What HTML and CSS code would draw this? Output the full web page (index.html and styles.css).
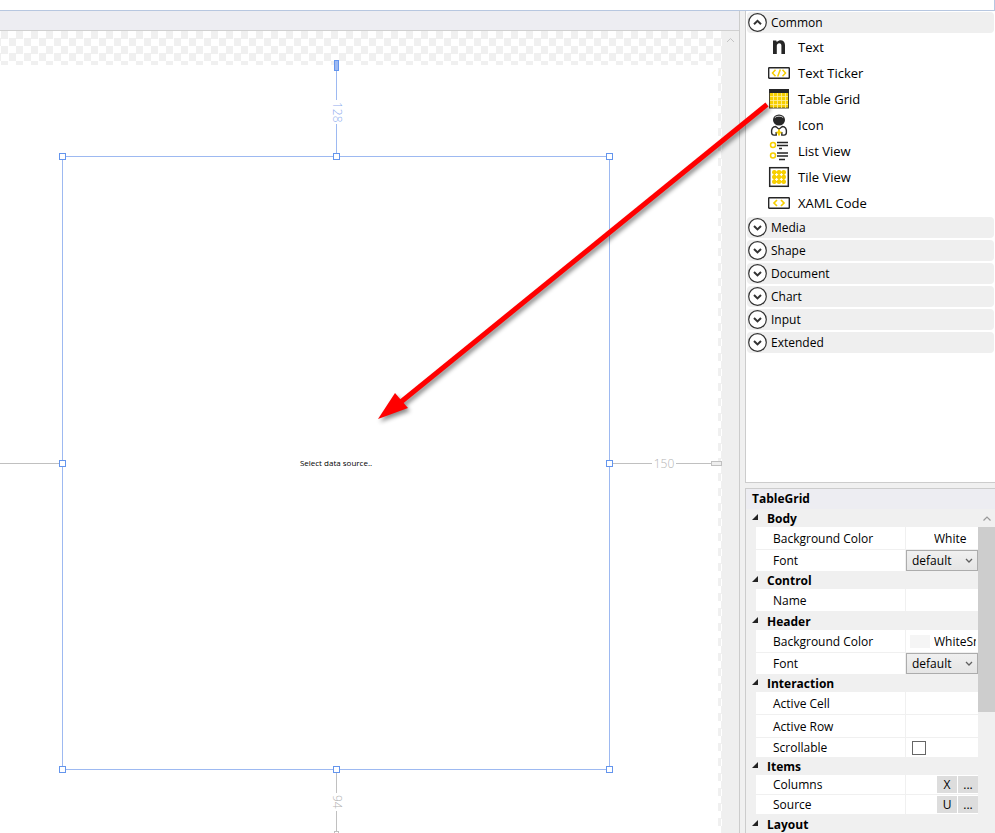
FILE: index.html
```html
<!DOCTYPE html>
<html lang="en">
<head>
<meta charset="utf-8">
<title>Designer</title>
<link rel="stylesheet" href="styles.css">
</head>
<body>
<div class="app">
  <div class="ribbon"></div>
  <div class="workspace">
    <main class="editor">
      <div class="tabbar"></div>
      <div class="canvas-row">
        <div class="canvas">
          <div class="artboard"></div>
          <div class="selection">
            <p class="placeholder">Select data source..</p>
            <i class="handle nw"></i><i class="handle n"></i><i class="handle ne"></i>
            <i class="handle w"></i><i class="handle e"></i>
            <i class="handle sw"></i><i class="handle s"></i><i class="handle se"></i>
          </div>
          <div class="measure measure-top"><i class="pin"></i><i class="line"></i><span class="distance">128</span><i class="line"></i></div>
          <div class="measure measure-bottom"><i class="line"></i><span class="distance">94</span><i class="line"></i><i class="pin"></i></div>
          <div class="measure measure-left"><i class="line"></i></div>
          <div class="measure measure-right"><i class="line"></i><span class="distance">150</span><i class="line line-end"></i><i class="pin"></i></div>
        </div>
        <div class="canvas-scroll"><svg width="9" height="6" viewBox="0 0 9 6"><path d="M1 5 4.500 1.500 8 5" fill="none" stroke="#c4c4c4"/></svg></div>
      </div>
    </main>
    <aside class="sidebar">
      <section class="toolbox">
        <button class="group"><svg class="chevron" viewBox="0 0 19 19"><circle cx="9.500" cy="9.500" r="8.800"/><path d="M6 11.200 9.500 7.800 13 11.200"/></svg>Common</button>
        <ul class="tools">
          <li><svg class="icon" viewBox="0 0 22 22"><path d="M5 4.500h3.300l.5 1.600C11.800 2.900 17 4 17 9v9h-3.600V9.600c0-3.200-4.600-3-4.600.2V18H5z" fill="#262626"/></svg>Text</li>
          <li><svg class="icon" viewBox="0 0 22 22"><rect x=".7" y="5.700" width="20.600" height="10.600" rx=".6" fill="#fff" stroke="#262626" stroke-width="1.400"/><path d="M7.500 7.800 4.500 11l3 3.200M14.500 7.800l3 3.200-3 3.200M12.300 7.500l-2.600 7" fill="none" stroke="#f7cf00" stroke-width="1.500"/></svg>Text Ticker</li>
          <li><svg class="icon" viewBox="0 0 22 22"><rect x="1.500" y="1.500" width="19" height="18.500" fill="#f7cf00" stroke="#4d472b"/><path d="M5.500 5v15M9.500 5v15M13.500 5v15M17.500 5v15M2 8.500h18M2 12.500h18M2 16.500h18" stroke="#fff0a0" stroke-width=".8"/><path d="M1 1h20v4H1z" fill="#262626"/></svg>Table Grid</li>
          <li><svg class="icon" viewBox="0 0 22 22"><path d="M8 12.500C4.500 12.500 3.300 15 3.600 18.500c.1 1.600.9 2.600 2.400 2.600h2.200V18M14 12.500c3.500 0 4.700 2.500 4.400 6-.1 1.600-.9 2.600-2.400 2.600h-2.200V18M7.700 12.500 11 15.200l3.300-2.700" fill="#fff" stroke="#262626" stroke-width="1.400"/><ellipse cx="11" cy="6" rx="6" ry="5.600" fill="#262626"/><path d="M6.800 3.600C8.500 1.700 13.500 1.700 15.200 3.600" fill="none" stroke="#fff" stroke-width=".8"/><path d="M11 15.500v6M8.500 18.500h5" stroke="#f7cf00" stroke-width="2"/></svg>Icon</li>
          <li><svg class="icon" viewBox="0 0 22 22"><g fill="none" stroke="#f7cf00" stroke-width="1.500"><circle cx="5" cy="5" r="2.500"/><circle cx="5" cy="15.500" r="2.500"/></g><path d="M9 2.500h11M9 5.500h11M11 8.500h3M9 13h11M9 16h11M11 19.500h6" stroke="#262626" stroke-width="1.500"/></svg>List View</li>
          <li><svg class="icon" viewBox="0 0 22 22"><rect x="1.700" y="1.700" width="18.600" height="18.600" fill="#fff" stroke="#262626" stroke-width="1.500"/><path d="M4.500 6.300h13M4.500 11h13M4.500 15.700h13M6.300 4.500v13M11 4.500v13M15.700 4.500v13" stroke="#f7cf00" stroke-width="1.500"/><g fill="#f7cf00"><circle cx="6.300" cy="6.300" r="2.300"/><circle cx="11" cy="6.300" r="2.300"/><circle cx="15.700" cy="6.300" r="2.300"/><circle cx="6.300" cy="11" r="2.300"/><circle cx="11" cy="11" r="2.300"/><circle cx="15.700" cy="11" r="2.300"/><circle cx="6.300" cy="15.700" r="2.300"/><circle cx="11" cy="15.700" r="2.300"/><circle cx="15.700" cy="15.700" r="2.300"/></g></svg>Tile View</li>
          <li><svg class="icon" viewBox="0 0 22 22"><rect x=".7" y="5.700" width="20.600" height="10.600" rx=".6" fill="#fff" stroke="#262626" stroke-width="1.400"/><path d="M9 8 6 11l3 3M13 8l3 3-3 3" fill="none" stroke="#f7cf00" stroke-width="1.700"/></svg>XAML Code</li>
        </ul>
        <button class="group"><svg class="chevron" viewBox="0 0 19 19"><circle cx="9.500" cy="9.500" r="8.800"/><path d="M6 8l3.500 3.400L13 8"/></svg>Media</button>
        <button class="group"><svg class="chevron" viewBox="0 0 19 19"><circle cx="9.500" cy="9.500" r="8.800"/><path d="M6 8l3.500 3.400L13 8"/></svg>Shape</button>
        <button class="group"><svg class="chevron" viewBox="0 0 19 19"><circle cx="9.500" cy="9.500" r="8.800"/><path d="M6 8l3.500 3.400L13 8"/></svg>Document</button>
        <button class="group"><svg class="chevron" viewBox="0 0 19 19"><circle cx="9.500" cy="9.500" r="8.800"/><path d="M6 8l3.500 3.400L13 8"/></svg>Chart</button>
        <button class="group"><svg class="chevron" viewBox="0 0 19 19"><circle cx="9.500" cy="9.500" r="8.800"/><path d="M6 8l3.500 3.400L13 8"/></svg>Input</button>
        <button class="group"><svg class="chevron" viewBox="0 0 19 19"><circle cx="9.500" cy="9.500" r="8.800"/><path d="M6 8l3.500 3.400L13 8"/></svg>Extended</button>
      </section>
      <section class="properties">
        <h2 class="title">TableGrid</h2>
        <div class="property-area">
          <div class="property-list">
            <h3 class="category">Body</h3>
            <div class="property"><label for="body-bg">Background Color</label><div class="value"><i class="swatch swatch-white"></i><input id="body-bg" class="field" value="White"></div></div>
            <div class="property compact"><label for="body-font">Font</label><div class="value"><select id="body-font" class="choice"><option>default</option></select></div></div>
            <h3 class="category">Control</h3>
            <div class="property"><label for="name">Name</label><div class="value"><input id="name" class="field"></div></div>
            <h3 class="category">Header</h3>
            <div class="property"><label for="header-bg">Background Color</label><div class="value"><i class="swatch"></i><input id="header-bg" class="field" value="WhiteSmoke"></div></div>
            <div class="property compact"><label for="header-font">Font</label><div class="value"><select id="header-font" class="choice"><option>default</option></select></div></div>
            <h3 class="category">Interaction</h3>
            <div class="property"><label for="cell">Active Cell</label><div class="value"><input id="cell" class="field"></div></div>
            <div class="property"><label for="row">Active Row</label><div class="value"><input id="row" class="field"></div></div>
            <div class="property short"><label for="scrollable">Scrollable</label><div class="value"><input id="scrollable" class="tick" type="checkbox"></div></div>
            <h3 class="category">Items</h3>
            <div class="property short"><span class="name">Columns</span><div class="value actions"><button aria-label="Columns value">X</button><button aria-label="Edit columns">...</button></div></div>
            <div class="property short"><span class="name">Source</span><div class="value actions"><button aria-label="Source value">U</button><button aria-label="Edit source">...</button></div></div>
            <h3 class="category">Layout</h3>
            <div class="property"></div>
          </div>
          <div class="property-scroll"><svg width="17" height="18" viewBox="0 0 17 18"><path d="M5.500 11.500 9 8l3.500 3.500" fill="none" stroke="#999" stroke-width="1.200"/></svg><i class="thumb"></i></div>
        </div>
      </section>
    </aside>
  </div>
  <svg class="arrow" width="410" height="340" viewBox="0 0 410 340"><path d="M397 4.500 29 303.500" stroke="#f00" stroke-width="5" fill="none"/><path d="M8 319 25 293l13 15z" fill="#f00"/></svg>
</div>
</body>
</html>
```

FILE: styles.css
```css
* { box-sizing: border-box; }
body { margin: 0; font: 12px/16px "Open Sans", "Noto Sans", sans-serif; color: #000; background: #fff; }
button, input, select { font: inherit; color: inherit; border: 0; margin: 0; padding: 0; border-radius: 0; }
h2, h3, p, ul { margin: 0; padding: 0; font-size: 12px; }

.app { position: relative; height: 100vh; overflow: hidden; display: flex; flex-direction: column; }
.ribbon { flex: none; height: 11px; border-bottom: 1px solid #b7c7e0; border-right: 1px solid #b7c7e0; }
.workspace { flex: 1; min-height: 0; display: flex; gap: 5px; background: #f0f0f0; }

/* Design surface */
.editor { flex: 1; min-width: 0; display: flex; flex-direction: column; border-right: 1px solid #ccc; }
.tabbar { flex: none; height: 20px; background: #ededf2; border-bottom: 1px solid #d0d0d0; }
.canvas-row { flex: 1; min-height: 0; display: flex; }
.canvas { position: relative; flex: 1; overflow: hidden; background: repeating-conic-gradient(#fff 0 25%, #f0f0f0 0 50%) 1px 0 / 15px 15px; }
.canvas-scroll { width: 17px; padding: 6px 4px; line-height: 0; background: #efefef; }
.artboard { position: absolute; inset: 34px 4px 0 0; background: #fff; }
.selection { position: absolute; left: 62px; top: 125px; width: 548px; height: 614px; border: 1px solid #9db9f1; display: grid; place-items: center; }
.placeholder { font-size: 8px; line-height: 12px; }
.handle { position: absolute; width: 7px; height: 7px; background: #fff; border: 1px solid #6495ed; }
.nw, .n, .ne { top: -4px; }
.w, .e { top: calc(50% - 3px); }
.sw, .s, .se { bottom: -4px; }
.nw, .w, .sw { left: -4px; }
.n, .s { left: calc(50% - 3px); }
.ne, .e, .se { right: -4px; }
.measure { position: absolute; display: flex; align-items: center; color: #b4b4b4; font-size: 12px; line-height: 12px; font-weight: 300; }
.line { flex: 1; background: #c0c0c0; }
.distance { flex: none; text-align: center; }
.measure-top, .measure-bottom { flex-direction: column; width: 13px; left: 330px; }
.measure-top .line, .measure-bottom .line { width: 1px; }
.measure-top .distance, .measure-bottom .distance { writing-mode: vertical-rl; }
.measure-top { top: 29px; height: 93px; color: #8fadee; }
.measure-top .line { background: #9db9f1; }
.measure-top .distance { height: 24px; }
.measure-top .pin { width: 5px; height: 11px; background: #9db9f1; border: 1px solid #6495ed; }
.measure-bottom { top: 742px; height: 63px; }
.measure-bottom .distance { height: 18px; }
.measure-bottom .pin { width: 5px; height: 5px; border: 1px solid #c0c0c0; }
.measure-left { left: 0; top: 432px; width: 59px; }
.measure-left .line, .measure-right .line { height: 1px; }
.measure-right { left: 613px; right: 0; top: 426px; line-height: 13px; }
.measure-right .distance { width: 24px; }
.measure-right .line-end { flex: 0 0 35px; }
.measure-right .pin { width: 11px; height: 5px; background: #eee; border: 1px solid #c0c0c0; }

/* Sidebar */
.sidebar { flex: none; width: 250px; display: flex; flex-direction: column; gap: 5px; }
.toolbox { flex: none; height: 472px; display: flex; flex-direction: column; gap: 2px; padding: 1px 1px 0; background: #fff; border-left: 1px solid #ccc; border-bottom: 1px solid #ccc; }
.group { flex: none; height: 21px; display: flex; align-items: center; gap: 4px; padding-left: 1px; background: #efefef; border-radius: 4px; }
.chevron { width: 19px; height: 19px; fill: #fff; stroke: #333; stroke-width: 1.2px; }
.chevron path { fill: none; stroke-width: 2px; }
.tools { list-style: none; margin: -1px 0; padding-left: 21px; font-size: 13px; }
.tools li { height: 26px; display: flex; align-items: center; gap: 8px; }
.icon { width: 22px; height: 22px; }
.properties { flex: 1; min-height: 0; display: flex; flex-direction: column; border: 1px solid #ccc; border-width: 1px 0 0 1px; }
.title { flex: none; padding: 2px 6px; height: 20px; background: #ededf2; }
.property-area { flex: 1; min-height: 0; display: flex; overflow: hidden; }
.property-list { flex: 1; min-width: 0; }
.category { position: relative; height: 18px; line-height: 20px; padding-left: 21px; }
.category::before { content: ""; position: absolute; left: 6px; top: 5px; border: 3px solid; border-color: transparent #222 #222 transparent; }
.property { display: grid; grid-template-columns: 149px 1fr; gap: 1px; height: 23px; margin-left: 10px; padding-top: 1px; border-bottom: 1px solid #f0f0f0; background: linear-gradient(90deg, #fff 149px, #f0f0f0 149px 150px, #fff 150px); }
.property label, .name { padding-left: 17px; align-self: center; }
.value { display: flex; align-items: center; min-width: 0; }
.field { flex: 1; min-width: 0; width: 0; background: none; margin-right: 2px; }
.swatch { width: 20px; height: 13px; margin: 0 4px; background: #f5f5f5; }
.swatch-white { background: #fff; }
.compact { height: 21px; padding: 0; border: 0; }
.choice { width: 100%; height: 21px; padding-left: 5px; appearance: none; border: 1px solid #acacac; background: url("data:image/svg+xml,%3Csvg xmlns='http://www.w3.org/2000/svg' width='8' height='6'%3E%3Cpath d='M1 1l3 3 3-3' fill='none' stroke='%23606060' stroke-width='1.300'/%3E%3C/svg%3E") right 4px top 7px no-repeat, linear-gradient(#f0f0f0, #e5e5e5); }
.short { height: 20px; padding: 0; }
.short:has(.tick) { height: 19px; border: 0; }
.tick { appearance: none; width: 14px; height: 14px; margin-left: 6px; background: #fff; border: 1px solid #666; }
.actions { justify-content: flex-end; gap: 1px; }
.actions button { width: 20px; height: 17px; line-height: 16px; background: #ddd; }
.property-scroll { width: 17px; display: flex; flex-direction: column; }
.property-scroll svg { flex: none; }
.thumb { height: 185px; background: #cdcdcd; }

.arrow { position: absolute; left: 370px; top: 100px; pointer-events: none; filter: drop-shadow(2px 3px 2px rgba(0, 0, 0, .45)); }
```
